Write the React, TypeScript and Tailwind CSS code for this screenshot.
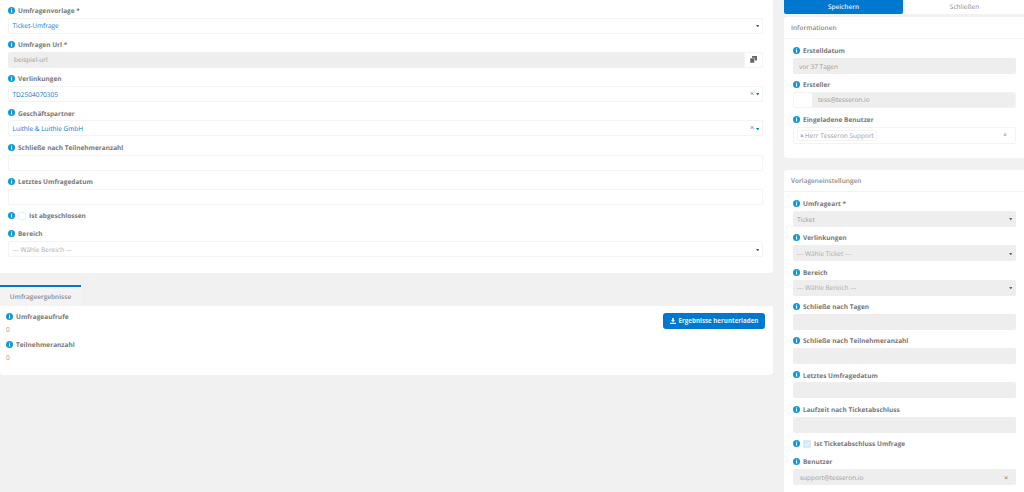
const font = "font-['Open_Sans',sans-serif] [text-rendering:geometricPrecision]";

function InfoIcon() {
  return (
    <svg className="w-[7px] h-[7px] shrink-0" viewBox="0 0 14 14">
      <circle cx="7" cy="7" r="7" fill="#0e9ad6" />
      <rect x="6" y="6" width="2.2" height="5" fill="#fff" />
      <rect x="6" y="3" width="2.2" height="2" fill="#fff" />
    </svg>
  );
}

function Caret({ color = "#0078d0" }: { color?: string }) {
  return (
    <svg className="w-[3.5px] h-[2.5px] shrink-0" viewBox="0 0 8 6">
      <path d="M0 0h8L4 6z" fill={color} />
    </svg>
  );
}

function Label({ text }: { text: string }) {
  return (
    <div className="h-[15px] flex items-center gap-[3px] text-[6.5px] font-bold text-[#777]">
      <InfoIcon />
      <span className="pt-[1px]">{text}</span>
    </div>
  );
}

function Box({ children, gray }: { children?: React.ReactNode; gray?: boolean }) {
  return (
    <div
      className={
        gray
          ? "h-[16px] pt-[1px] rounded-[2px] bg-[#eeeeee] flex items-center px-[4px] text-[6.5px] text-[#999]"
          : "h-[16px] pt-[1px] rounded-[2px] bg-white border border-[#f3f3f3] flex items-center pl-[3.5px] pr-[3px] text-[6.5px] text-[#0078d0]"
      }
    >
      {children}
    </div>
  );
}

function Field({ label, children, gray }: { label: string; children?: React.ReactNode; gray?: boolean }) {
  return (
    <div className="mb-[3.3px]">
      <Label text={label} />
      <Box gray={gray}>{children}</Box>
    </div>
  );
}

function Check({ label, checked }: { label: string; checked?: boolean }) {
  return (
    <div className="h-[15px] flex items-center gap-[3px] text-[6.5px] font-bold text-[#777]">
      <InfoIcon />
      <span
        className={
          checked
            ? "w-[8px] h-[8px] rounded-[1px] bg-[#d5e9f8] flex items-center justify-center"
            : "w-[8px] h-[8px] rounded-[1px] bg-white border border-[#f0f0f0]"
        }
      >
        {checked && (
          <svg className="w-[6px] h-[6px]" viewBox="0 0 12 12">
            <path d="M2 6l3 3 5-6" stroke="#fff" strokeWidth="2" fill="none" />
          </svg>
        )}
      </span>
      <span className="pt-[1px]">{label}</span>
    </div>
  );
}

function CardHeader({ text }: { text: string }) {
  return (
    <div className="h-[22px] pt-[1px] border-b border-[#f3f3f3] flex items-center px-[7px] text-[6.5px] font-semibold text-[#888]">
      {text}
    </div>
  );
}

export default function App() {
  return (
    <div className={`${font} w-[1024px] h-[492px] overflow-hidden bg-[#f1f1f1] flex`}>
      {/* Main column */}
      <div className="w-[773px] shrink-0">
        <div className="h-[273px] bg-white rounded-br-[3px] pl-[8px] pr-[10px] pt-[2.5px]">
          <Field label="Umfragenvorlage *">
            <span className="flex-1">Ticket-Umfrage</span>
            <Caret />
          </Field>
          <div className="mb-[3.3px]">
            <Label text="Umfragen Url *" />
            <div className="flex h-[16px]">
              <div className="flex-1 pt-[1px] bg-[#eeeeee] rounded-l-[2px] flex items-center px-[6px] text-[6.5px] text-[#999]">
                beispiel-url
              </div>
              <div className="w-[19px] border border-[#f3f3f3] rounded-r-[2px] flex items-center justify-center">
                <svg className="w-[7px] h-[7px]" viewBox="0 0 14 14">
                  <rect x="4" y="0" width="10" height="9" fill="#666" />
                  <rect x="0" y="4" width="9" height="10" fill="#666" stroke="#fff" strokeWidth="1" />
                </svg>
              </div>
            </div>
          </div>
          <Field label="Verlinkungen">
            <span className="flex-1">TD2504070305</span>
            <span className="text-[7px] leading-none mr-[1.5px]">×</span>
            <Caret />
          </Field>
          <Field label="Geschäftspartner">
            <span className="flex-1">Luithle &amp; Luithle GmbH</span>
            <span className="text-[7px] leading-none mr-[1.5px]">×</span>
            <Caret />
          </Field>
          <Field label="Schließe nach Teilnehmeranzahl" />
          <Field label="Letztes Umfragedatum" />
          <div className="mt-[0.5px]">
            <Check label="Ist abgeschlossen" />
          </div>
          <div className="mt-[3px]">
            <Field label="Bereich">
              <span className="flex-1 text-[#aaa]">--- Wähle Bereich ---</span>
              <Caret />
            </Field>
          </div>
        </div>

        <div className="mt-[12px] w-[81px] h-[21px] bg-[#f3f3f3] border-t-2 border-t-[#0078d0] flex items-center justify-center text-[6.5px] font-semibold text-[#888]">
          Umfrageergebnisse
        </div>

        <div className="h-[69px] bg-white rounded-b-[3px] pl-[6px] pr-[8px] pt-[3px] flex justify-between">
          <div>
            <Label text="Umfrageaufrufe" />
            <div className="h-[13px] pb-[1px] flex items-center text-[6.5px] text-[#999]">0</div>
            <Label text="Teilnehmeranzahl" />
            <div className="h-[13px] pb-[1px] flex items-center text-[6.5px] text-[#999]">0</div>
          </div>
          <button className="mt-[4px] h-[16px] w-[102px] bg-[#0078d0] rounded-[3px] flex items-center justify-center gap-[3px] whitespace-nowrap text-[6.2px] font-bold text-[#e4f1fb]">
            <svg className="w-[6px] h-[6px]" viewBox="0 0 14 14">
              <path d="M5 0h4v5h3L7 10 2 5h3zM0 11h14v3H0z" fill="#e4f1fb" />
            </svg>
            Ergebnisse herunterladen
          </button>
        </div>
      </div>

      {/* Side column */}
      <div className="w-[240px] ml-[11px] shrink-0">
        <div className="flex h-[14px] gap-[2px] text-[6.5px]">
          <div className="flex-1 bg-[#0078d0] rounded-b-[2px] flex items-center justify-center font-semibold text-[#e4f1fb]">
            Speichern
          </div>
          <div className="flex-1 bg-white rounded-bl-[2px] flex items-center justify-center text-[#888]">
            Schließen
          </div>
        </div>

        <div className="mt-[3px] h-[141px] bg-white rounded-l-[3px]">
          <CardHeader text="Informationen" />
          <div className="pl-[9px] pr-[8px] pt-[4px]">
            <Field label="Erstelldatum" gray>
              <span className="pl-[2px]">vor 37 Tagen</span>
            </Field>
            <div className="mb-[3.3px]">
              <Label text="Ersteller" />
              <div className="flex h-[16px] rounded-[2px] border border-[#f3f3f3]">
                <div className="w-[18px]" />
                <div className="flex-1 bg-[#eeeeee] rounded-r-[2px] flex items-center px-[6px] text-[6.5px] text-[#999]">
                  tess@tesseron.io
                </div>
              </div>
            </div>
            <div>
              <Label text="Eingeladene Benutzer" />
              <div className="h-[17px] rounded-[2px] bg-white border border-[#f3f3f3] flex items-center pl-[3px] pr-[8px] text-[6.5px] text-[#999]">
                <span className="flex-1">
                  <span className="inline-flex items-center gap-[1px] border border-[#f3f3f3] rounded-[2px] pl-[2px] pr-[2px] leading-[9px]">
                    <span className="text-[#0078d0]">×</span>Herr Tesseron Support
                  </span>
                </span>
                <span className="text-[#777]">×</span>
              </div>
            </div>
          </div>
        </div>

        <div className="mt-[12px] h-[322px] bg-white rounded-tl-[3px]">
          <CardHeader text="Vorlageneinstellungen" />
          <div className="pl-[9px] pr-[8px] pt-[4px]">
            <Field label="Umfrageart *" gray>
              <span className="flex-1">Ticket</span>
              <Caret color="#666" />
            </Field>
            <Field label="Verlinkungen" gray>
              <span className="flex-1 text-[#aaa]">--- Wähle Ticket ---</span>
              <Caret color="#666" />
            </Field>
            <Field label="Bereich" gray>
              <span className="flex-1 text-[#aaa]">--- Wähle Bereich ---</span>
              <Caret color="#666" />
            </Field>
            <Field label="Schließe nach Tagen" gray />
            <Field label="Schließe nach Teilnehmeranzahl" gray />
            <Field label="Letztes Umfragedatum" gray />
            <Field label="Laufzeit nach Ticketabschluss" gray />
            <Check label="Ist Ticketabschluss Umfrage" checked />
            <div className="mt-[3px]">
              <Field label="Benutzer" gray>
                <span className="flex-1 pl-[3px]">support@tesseron.io</span>
                <span className="text-[#666] pr-[4px]">×</span>
              </Field>
            </div>
          </div>
        </div>
      </div>
    </div>
  );
}
